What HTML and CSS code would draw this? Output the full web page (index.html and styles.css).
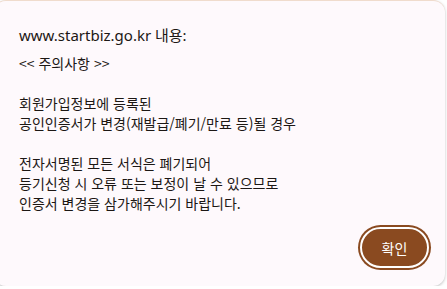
FILE: index.html
```html
<!DOCTYPE html>
<html lang="ko">
<head>
    <meta charset="UTF-8">
    <meta name="viewport" content="width=device-width, initial-scale=1.0">
    <title>www.startbiz.go.kr 내용</title>
    <link rel="stylesheet" href="styles.css">
</head>
<body>
    <!-- 알림 대화상자 -->
    <div class="dialog">
        <div class="dialog-title">www.startbiz.go.kr 내용:</div>
        <div class="dialog-message">&lt;&lt; 주의사항 &gt;&gt;

회원가입정보에 등록된
공인인증서가 변경(재발급/폐기/만료 등)될 경우

전자서명된 모든 서식은 폐기되어
등기신청 시 오류 또는 보정이 날 수 있으므로
인증서 변경을 삼가해주시기 바랍니다.</div>
        <div class="dialog-buttons">
            <button class="btn-ok">확인</button>
        </div>
    </div>
</body>
</html>
```

FILE: styles.css
```css
body {
    margin: 0;
    padding: 0;
    background-color: #ffffff;
    font-family: "Noto Sans", "Noto Sans CJK KR", sans-serif;
    color: #1c1714;
    overflow: hidden;
}
.dialog {
    box-sizing: border-box;
    margin-left: -6px;
    width: 451px;
    height: 286px;
    padding: 24px 16px 18px 25px;
    background-color: #fef9fc;
    border-top: 1px solid #f0dccd;
    border-radius: 12px;
    box-shadow: 0 1px 3px rgba(0, 0, 0, 0.25);
    display: flex;
    flex-direction: column;
}
.dialog-title {
    font-size: 15px;
    line-height: 20px;
}
.dialog-message {
    margin-top: 8px;
    font-family: "Noto Sans CJK KR", sans-serif;
    font-size: 14px;
    line-height: 20px;
    white-space: pre-line;
}
.dialog-buttons {
    margin-top: auto;
    display: flex;
    justify-content: flex-end;
}
.btn-ok {
    box-sizing: border-box;
    width: 69px;
    height: 41px;
    background-color: #8a4a20;
    color: #ffffff;
    border: 2px solid #ffffff;
    border-radius: 21px;
    box-shadow: 0 0 0 2px #8a4a20;
    font-family: "Noto Sans CJK KR", sans-serif;
    font-size: 14px;
    cursor: pointer;
}
```
